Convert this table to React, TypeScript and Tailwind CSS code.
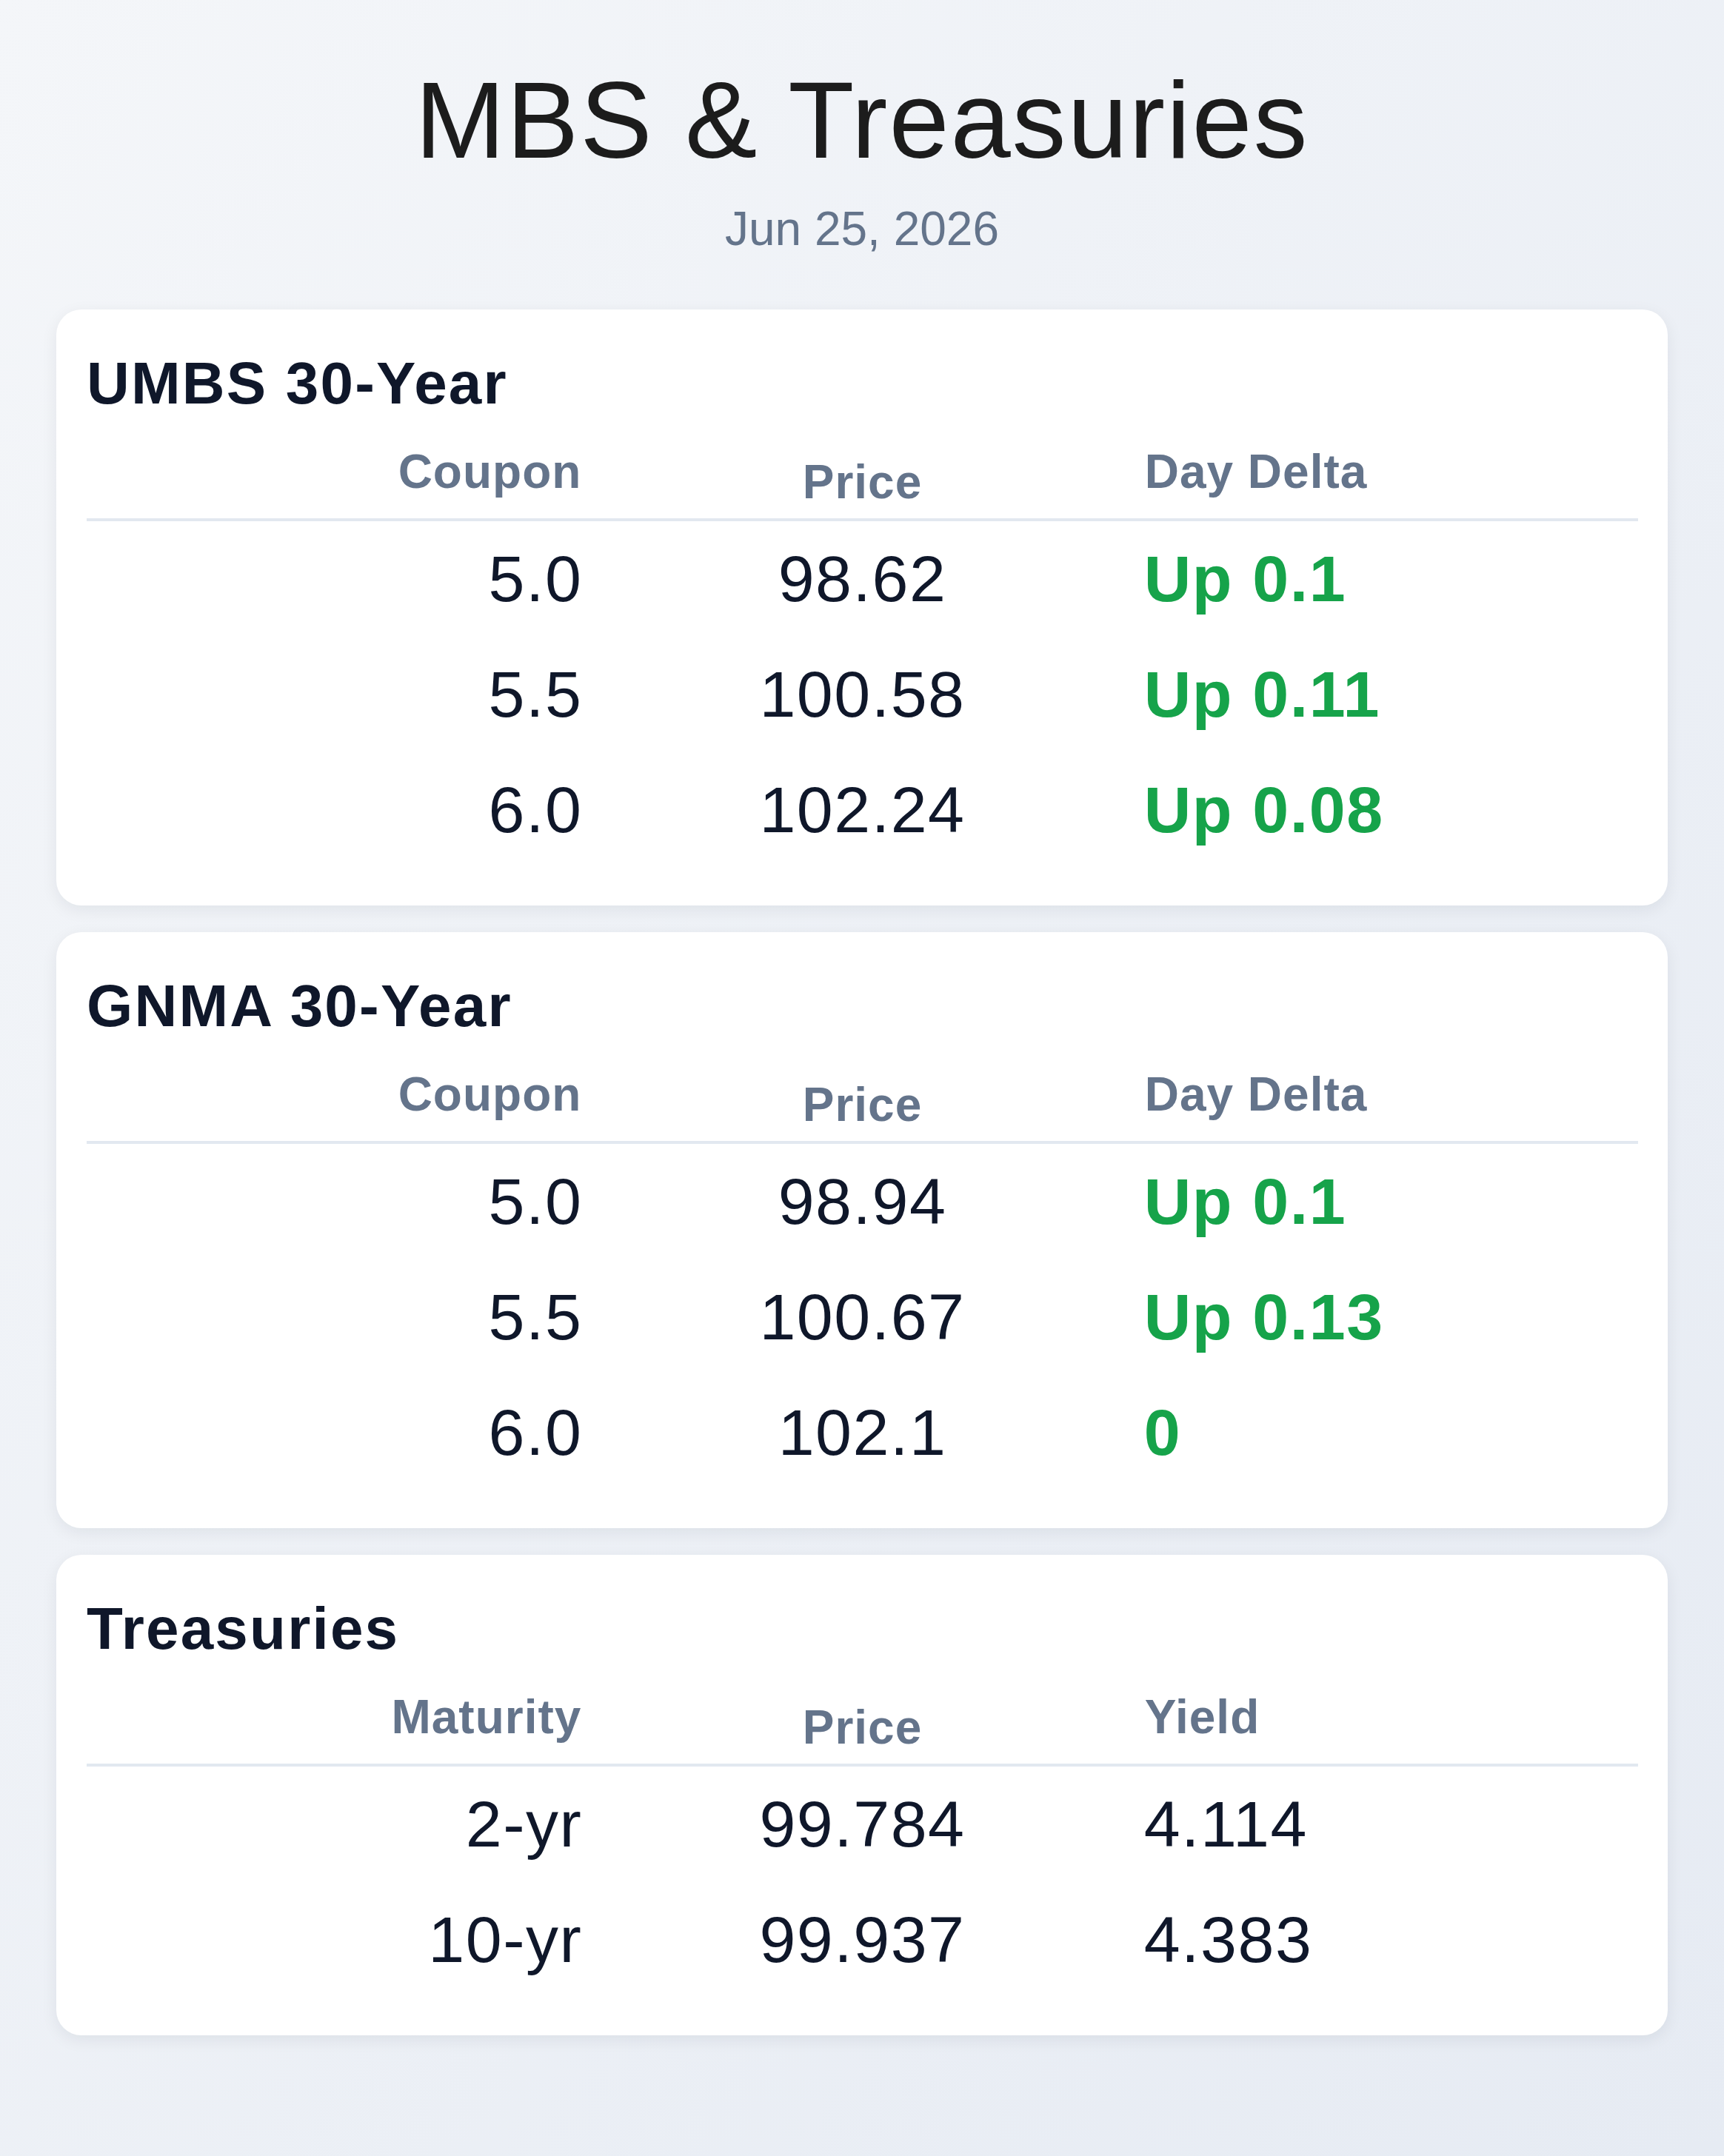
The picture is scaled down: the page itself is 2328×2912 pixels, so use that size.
import React from "react";

type Row = { a: string; b: string; c: string };

const font = { fontFamily: '"Liberation Sans", Arial, sans-serif' };

function Card({ title, cols, rows, green }: { title: string; cols: [string, string, string]; rows: Row[]; green: boolean }) {
  return (
    <section className="bg-white rounded-[34px] shadow-[0_6px_22px_rgba(15,23,42,0.07)] pt-[52px] pb-[51px] pl-[41px] pr-[40px]">
      <h2 className="text-[80px] leading-[96px] font-bold tracking-[2.2px] text-[#0f172a]">{title}</h2>
      <div className="grid grid-cols-3 h-[138px] border-b-4 border-[#e2e8f0] text-[64px] leading-[76px] font-bold tracking-[1px] text-[#64748b]">
        <div className="text-right pl-[32px] pr-[30px] pt-[33px]">{cols[0]}</div>
        <div className="text-center px-[32px] pt-[47px]">{cols[1]}</div>
        <div className="text-left px-[32px] pt-[33px]">{cols[2]}</div>
      </div>
      {rows.map((r, i) => (
        <div key={i} className="grid grid-cols-3 py-[25px] text-[88px] leading-[106px] tracking-[1.5px] text-[#0f172a]">
          <div className="text-right pl-[32px] pr-[29px]">{r.a}</div>
          <div className="text-center px-[32px]">{r.b}</div>
          <div className={green ? "text-left pl-[31px] pr-[32px] font-bold tracking-[1.6px] text-[#16a34a]" : "text-left pl-[31px] pr-[32px]"}>{r.c}</div>
        </div>
      ))}
    </section>
  );
}

export default function App() {
  return (
    <div style={font} className="min-h-[2912px] w-full bg-linear-to-br from-[#f4f6f9] to-[#e6ebf3] px-[76px] pt-[76px] pb-[120px]">
      <header className="text-center">
        <h1 className="text-[146px] leading-[174px] font-normal tracking-[1.9px] text-[#1c1c1c]">MBS &amp; Treasuries</h1>
        <p className="mt-[21px] text-[64px] leading-[77px] text-[#64748b]">Jun 25, 2026</p>
      </header>
      <main className="mt-[70px] flex flex-col gap-[36px]">
        <Card
          title="UMBS 30-Year"
          cols={["Coupon", "Price", "Day Delta"]}
          green
          rows={[
            { a: "5.0", b: "98.62", c: "Up 0.1" },
            { a: "5.5", b: "100.58", c: "Up 0.11" },
            { a: "6.0", b: "102.24", c: "Up 0.08" },
          ]}
        />
        <Card
          title="GNMA 30-Year"
          cols={["Coupon", "Price", "Day Delta"]}
          green
          rows={[
            { a: "5.0", b: "98.94", c: "Up 0.1" },
            { a: "5.5", b: "100.67", c: "Up 0.13" },
            { a: "6.0", b: "102.1", c: "0" },
          ]}
        />
        <Card
          title="Treasuries"
          cols={["Maturity", "Price", "Yield"]}
          green={false}
          rows={[
            { a: "2-yr", b: "99.784", c: "4.114" },
            { a: "10-yr", b: "99.937", c: "4.383" },
          ]}
        />
      </main>
    </div>
  );
}
